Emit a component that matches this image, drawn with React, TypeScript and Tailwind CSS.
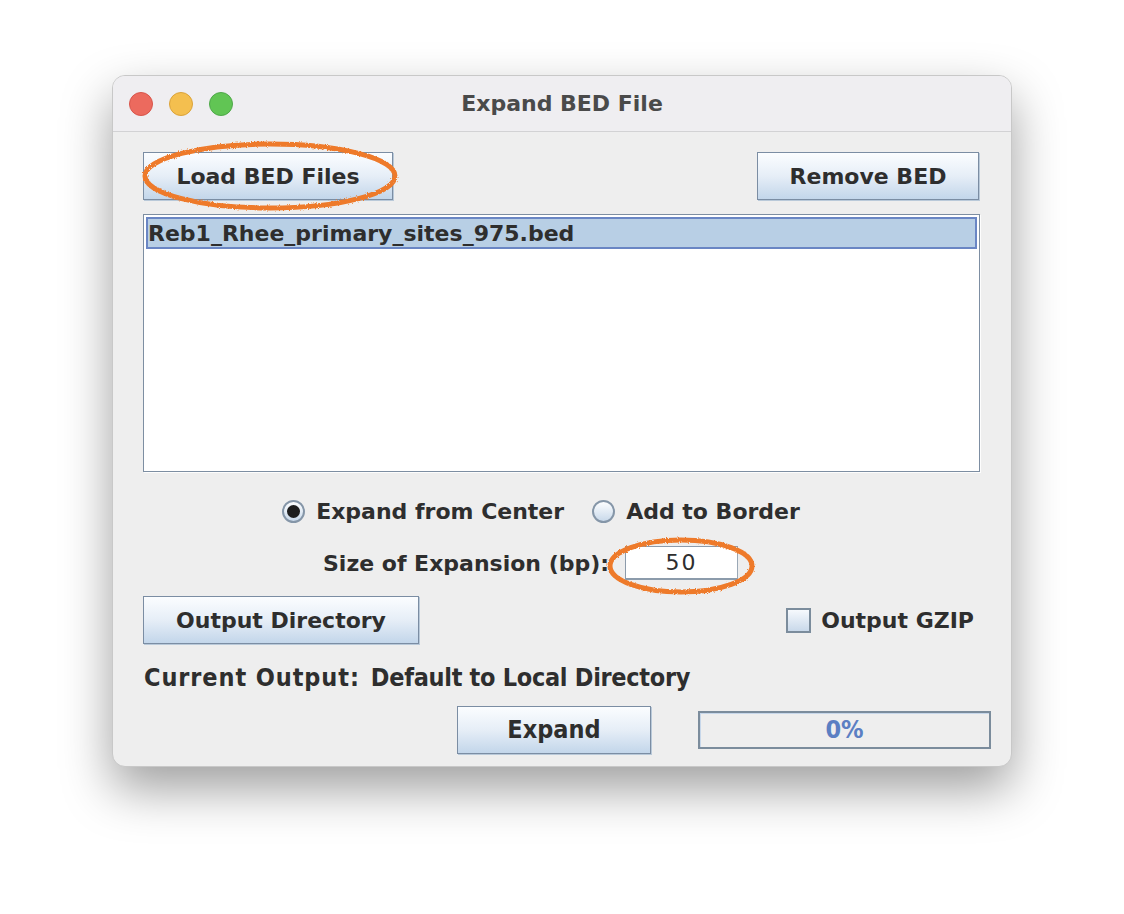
import React from "react";

const font = "font-['DejaVu_Sans',sans-serif]";
const cond = "font-['DejaVu_Sans_Condensed','DejaVu_Sans',sans-serif]";

function JButton({ label, className, textClass }: { label: string; className: string; textClass?: string }) {
  return (
    <div
      className={`flex shrink-0 items-center justify-center border border-[#7b8da3] bg-gradient-to-b from-[#fbfdff] via-[#e6eef7] to-[#c3d6ea] shadow-[1px_1px_0_#b9c9d9] ${className}`}
    >
      <span className={`font-bold text-[#2e2e2e] ${textClass ?? `${font} text-[22px]`}`}>{label}</span>
    </div>
  );
}

function Radio({ checked, label }: { checked: boolean; label: string }) {
  return (
    <div className="flex items-center gap-[11px]">
      <div className="flex h-[23px] w-[23px] items-center justify-center rounded-full border-2 border-[#8596a8] bg-gradient-to-b from-[#fdfeff] to-[#c9d9ea]">
        {checked && <div className="h-[13px] w-[13px] rounded-full bg-[#1e1e1e]" />}
      </div>
      <span className={`${font} text-[22px] font-bold text-[#2e2e2e]`}>{label}</span>
    </div>
  );
}

export default function App() {
  return (
    <div className="min-h-[914px] w-[1124px] bg-white pl-[112px] pt-[75px]">
      <div className="relative w-[900px] overflow-hidden rounded-[13px] border border-[#c8c8c8] bg-[#eeeeee] shadow-[0_22px_50px_rgba(0,0,0,0.38)]">
        {/* title bar */}
        <div className="relative flex h-[56px] items-center justify-center border-b border-[#d2d2d4] bg-[#efeef1]">
          <div className="absolute left-[16px] top-[16px] flex gap-[16px]">
            <div className="h-[24px] w-[24px] rounded-full border border-[#d8554b] bg-[#ec6a5e]" />
            <div className="h-[24px] w-[24px] rounded-full border border-[#dba33a] bg-[#f4bf4f]" />
            <div className="h-[24px] w-[24px] rounded-full border border-[#4fa84a] bg-[#61c554]" />
          </div>
          <span className={`${font} text-[22px] font-bold text-[#4a4a4a]`}>Expand BED File</span>
        </div>

        {/* content */}
        <div className="flex flex-col pl-[30px] pr-[32px] pt-[20px]">
          <div className="flex items-start justify-between">
            <JButton label="Load BED Files" className="h-[48px] w-[250px]" />
            <JButton label="Remove BED" className="h-[48px] w-[222px]" />
          </div>

          <div className="mt-[14px] h-[258px] w-[837px] border border-[#7d8ea2] bg-white p-[2px] shadow-[1px_1px_0_#fdfdfd]">
            <div className="flex h-[32px] items-center border-2 border-[#6a86c4] bg-[#b8cfe5]">
              <span className={`${font} text-[22px] font-bold text-[#2e2e2e]`}>Reb1_Rhee_primary_sites_975.bed</span>
            </div>
          </div>

          <div className="mt-[24px] flex h-[30px] items-center justify-center gap-[28px] pr-[40px]">
            <Radio checked label="Expand from Center" />
            <Radio checked={false} label="Add to Border" />
          </div>

          <div className="mt-[20px] flex h-[34px] items-center">
            <span className={`${font} ml-[180px] text-[22px] font-bold text-[#2e2e2e]`}>Size of Expansion (bp):</span>
            <div className="ml-[16px] flex h-[34px] w-[113px] items-center justify-center border border-b-2 border-[#8c9bab] border-r-[#9aa8b6] bg-white">
              <span className={`${font} text-[22px] tracking-[2px] text-[#2e2e2e]`}>50</span>
            </div>
          </div>

          <div className="mt-[16px] flex h-[48px] items-center justify-between">
            <JButton label="Output Directory" className="h-[48px] w-[276px]" />
            <div className="mr-[5px] flex items-center gap-[10px]">
              <div className="h-[25px] w-[25px] border-2 border-[#7b8c9c] bg-gradient-to-b from-[#f6f9fd] to-[#c9d9ea]" />
              <span className={`${font} text-[22px] font-bold text-[#2e2e2e]`}>Output GZIP</span>
            </div>
          </div>

          <div className="mt-[20px] flex h-[28px] items-center pl-[1px]">
            <span className={`${cond} text-[25px] font-bold tracking-[0.9px] text-[#2e2e2e]`}>Current Output:</span>
            <span className={`${cond} ml-[11px] text-[25px] font-bold tracking-[-0.3px] text-[#2e2e2e]`}>Default to Local Directory</span>
          </div>

          <div className="mb-[12px] mt-[14px] flex h-[48px] items-center">
            <JButton label="Expand" className="ml-[314px] h-[48px] w-[194px]" textClass={`${cond} text-[25px]`} />
            <div className="ml-[47px] flex h-[38px] w-[293px] shrink-0 items-center justify-center border-2 border-[#7b8c9c] bg-[#eeeeee] shadow-[inset_1px_1px_0_#c7d7ea]">
              <span className={`${cond} text-[25px] font-bold text-[#5b7fc3]`}>0%</span>
            </div>
          </div>
        </div>

        {/* annotation marks */}
        <svg className="pointer-events-none absolute left-0 top-0" width="900" height="690" viewBox="0 0 900 690">
          <defs>
            <filter id="crayon" x="-10%" y="-30%" width="120%" height="160%">
              <feTurbulence type="fractalNoise" baseFrequency="0.9" numOctaves="2" seed="3" />
              <feDisplacementMap in="SourceGraphic" scale="3" />
            </filter>
          </defs>
          <g filter="url(#crayon)">
            <ellipse cx="157" cy="100" rx="125" ry="32" fill="none" stroke="#ee7a2a" strokeWidth="5" />
            <ellipse cx="568" cy="490" rx="71" ry="26" fill="none" stroke="#ee7a2a" strokeWidth="5" />
          </g>
        </svg>
      </div>
    </div>
  );
}
